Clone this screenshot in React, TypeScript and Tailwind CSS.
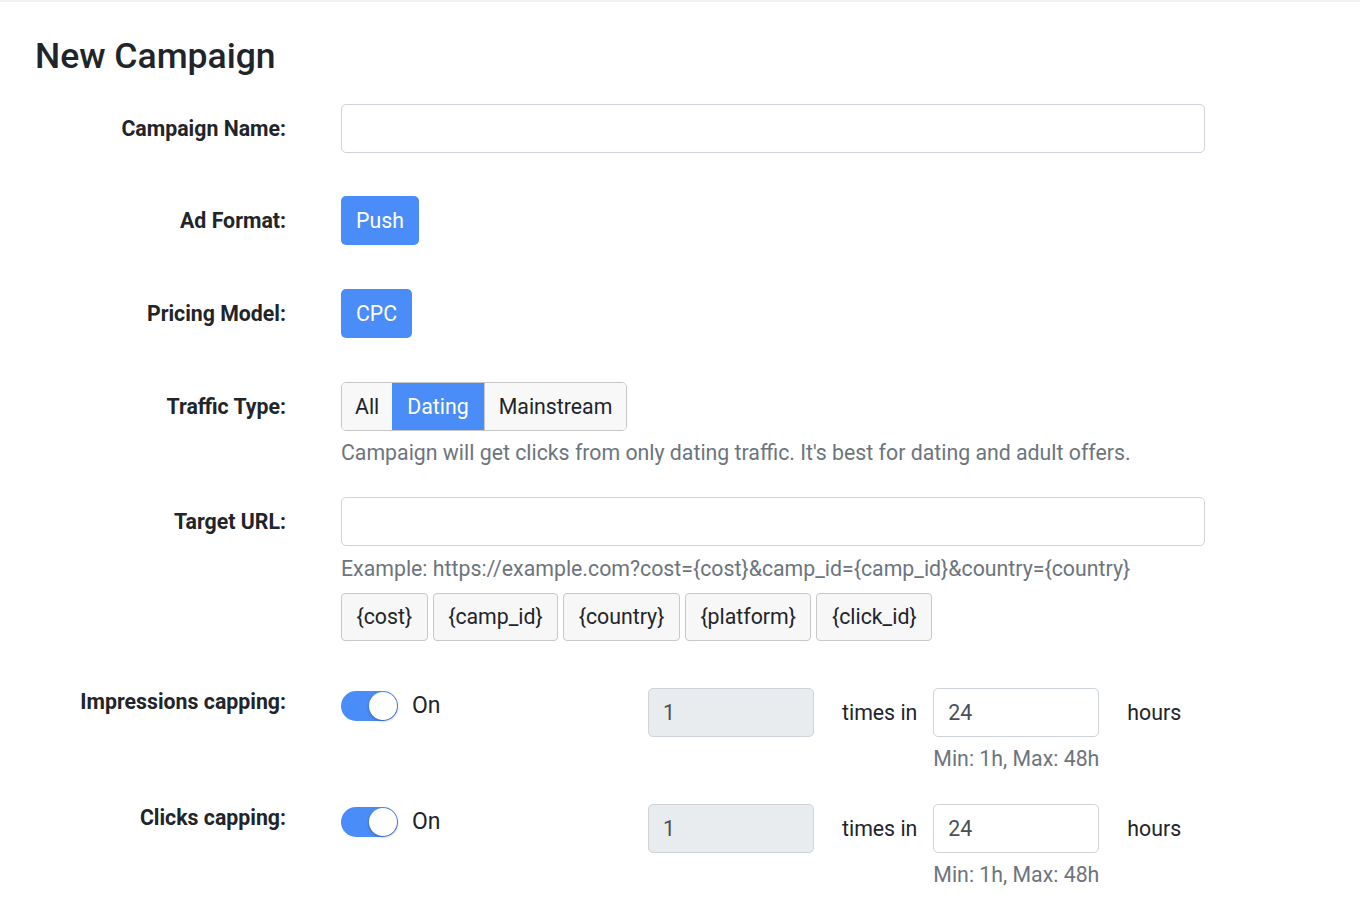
import React from "react";

const BLUE = "bg-[#4b8df8]";

interface RowProps {
  label: string;
  labelPad?: string;
  children: React.ReactNode;
  className?: string;
}

const Row = ({ label, labelPad = "pt-[13px]", children, className = "" }: RowProps) => (
  <div className={`grid grid-cols-[251px_1fr] gap-x-[55px] ${className}`}>
    <div className={`text-right font-bold text-[21.3px] leading-[24px] text-[#212529] ${labelPad}`}>{label}</div>
    <div>{children}</div>
  </div>
);

const TextInput = ({ value = "", gray = false, width = "w-[864px]" }: { value?: string; gray?: boolean; width?: string }) => (
  <div
    className={`${width} h-[49px] rounded-[5px] border border-[#ced4da] flex items-center px-[14px] text-[21.3px] text-[#495057] ${
      gray ? "bg-[#e9ecef]" : "bg-white"
    }`}
  >
    {value}
  </div>
);

const Help = ({ children, className = "" }: { children: React.ReactNode; className?: string }) => (
  <div className={`text-[21.3px] leading-[24px] text-[#6c757d] ${className}`}>{children}</div>
);

const Toggle = () => (
  <div className={`relative w-[57px] h-[30px] rounded-full ${BLUE}`}>
    <div className="absolute right-[1px] top-[1px] w-[28px] h-[28px] rounded-full bg-white shadow-[0_1px_3px_rgba(0,0,0,0.35)]" />
  </div>
);

const Capping = ({ label, className = "" }: { label: string; className?: string }) => (
  <Row label={label} labelPad="pt-[2px]" className={className}>
    <div className="flex items-start">
      <div className="w-[307px] flex items-center gap-[14px] pt-[3px]">
        <Toggle />
        <span className="text-[23px] leading-[30px] text-[#212529]">On</span>
      </div>
      <TextInput value="1" gray width="w-[166px]" />
      <span className="ml-[28px] mr-[16px] h-[49px] flex items-center text-[21.3px] text-[#212529]">times in</span>
      <div>
        <TextInput value="24" width="w-[166px]" />
        <Help className="mt-[10px]">Min: 1h, Max: 48h</Help>
      </div>
      <span className="ml-[28px] h-[49px] flex items-center text-[21.3px] text-[#212529]">hours</span>
    </div>
  </Row>
);

const App = (): JSX.Element => {
  const tags = ["{cost}", "{camp_id}", "{country}", "{platform}", "{click_id}"];

  return (
    <div className="min-h-screen bg-white border-t-2 border-[#f0f1f3] font-['Roboto','Liberation_Sans',sans-serif] text-[#212529]">
      <div className="pl-[35px] pt-[33px] pb-[30px]">
        <h1 className="text-[35.5px] leading-[43px] font-medium text-[#212529]">New Campaign</h1>

        <Row label="Campaign Name:" className="mt-[26px]">
          <TextInput />
        </Row>

        <Row label="Ad Format:" className="mt-[43px]">
          <button className={`h-[49px] px-[15px] rounded-[5px] text-[21.3px] text-white ${BLUE}`}>Push</button>
        </Row>

        <Row label="Pricing Model:" className="mt-[44px]">
          <button className={`h-[49px] px-[15px] rounded-[5px] text-[21.3px] text-white ${BLUE}`}>CPC</button>
        </Row>

        <Row label="Traffic Type:" className="mt-[44px]">
          <div className="inline-flex h-[49px] rounded-[5px] border border-[#c6c6c6] overflow-hidden text-[21.3px]">
            <span className="px-[13px] flex items-center bg-[#f8f8f8] text-[#212529]">All</span>
            <span className={`px-[15px] flex items-center text-white ${BLUE}`}>Dating</span>
            <span className="px-[14px] flex items-center bg-[#f8f8f8] text-[#212529] border-l border-[#c6c6c6]">Mainstream</span>
          </div>
          <Help className="mt-[10px]">
            Campaign will get clicks from only dating traffic. It&apos;s best for dating and adult offers.
          </Help>
        </Row>

        <Row label="Target URL:" className="mt-[32px]">
          <TextInput />
          <Help className="mt-[11px]">
            Example: https://example.com?cost={"{cost}"}&amp;camp_id={"{camp_id}"}&amp;country={"{country}"}
          </Help>
          <div className="flex gap-[5px] mt-[12px]">
            {tags.map((t) => (
              <button
                key={t}
                className="h-[48px] px-[14.5px] rounded-[4px] border border-[#c8c8c8] bg-[#f7f7f7] text-[21.3px] text-[#212529]"
              >
                {t}
              </button>
            ))}
          </div>
        </Row>

        <Capping label="Impressions capping:" className="mt-[47px]" />
        <Capping label="Clicks capping:" className="mt-[33px]" />
      </div>
    </div>
  );
};

export default App;
